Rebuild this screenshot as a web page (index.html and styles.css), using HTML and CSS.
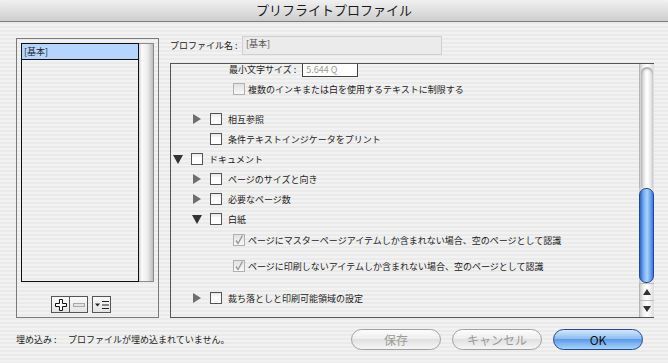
FILE: index.html
```html
<!DOCTYPE html>
<html lang="ja">
<head>
  <meta charset="UTF-8">
  <title>プリフライトプロファイル</title>
  <link rel="stylesheet" href="styles.css">
</head>
<body>
  <div class="window">
    <div class="titlebar">プリフライトプロファイル</div>

    <div class="content">
      <div class="sidebar">
        <div class="profile-list">
          <div class="rows">
            <div class="profile selected">[基本]</div>
          </div>
          <div class="list-scroll"></div>
        </div>
        <div class="list-tools">
          <div class="tool">
            <svg width="12" height="12" viewBox="0 0 12 12"><path d="M4.5 0.5h3v4h4v3h-4v4h-3v-4h-4v-3h4z" fill="#fff" stroke="#111" stroke-width="1"/></svg>
          </div>
          <div class="tool">
            <svg width="12" height="6" viewBox="0 0 12 6"><rect x="0.5" y="1.5" width="11" height="3" fill="#e4e4e4" stroke="#a8a8a8"/></svg>
          </div>
          <div class="tool menu">
            <svg width="14" height="10" viewBox="0 0 14 10"><path d="M0 3.5h5l-2.5 3z" fill="#222"/><path d="M7 1.5h7M7 5h7M7 8.5h7" stroke="#222" stroke-width="1"/></svg>
          </div>
        </div>
      </div>

      <div class="detail">
        <div class="name-row">
          <span class="name-label">プロファイル名 :</span>
          <div class="name-field">[基本]</div>
        </div>

        <div class="rules">
          <div class="rules-view">
            <div class="rules-inner">
              <div class="row row-size">
                <span class="size-label">最小文字サイズ :</span>
                <div class="size-field">5.644 Q</div>
              </div>
              <div class="row lvl2">
                <span class="check disabled"></span>
                <span>複数のインキまたは白を使用するテキストに制限する</span>
              </div>

              <div class="row lvl1 gap-10">
                <span class="twisty"><i class="tri-right"></i></span>
                <span class="check"></span>
                <span>相互参照</span>
              </div>
              <div class="row lvl1">
                <span class="twisty"></span>
                <span class="check"></span>
                <span>条件テキストインジケータをプリント</span>
              </div>
              <div class="row lvl0">
                <span class="twisty"><i class="tri-down"></i></span>
                <span class="check"></span>
                <span>ドキュメント</span>
              </div>
              <div class="row lvl1">
                <span class="twisty"><i class="tri-right"></i></span>
                <span class="check"></span>
                <span>ページのサイズと向き</span>
              </div>
              <div class="row lvl1">
                <span class="twisty"><i class="tri-right"></i></span>
                <span class="check"></span>
                <span>必要なページ数</span>
              </div>
              <div class="row lvl1">
                <span class="twisty"><i class="tri-down"></i></span>
                <span class="check"></span>
                <span>白紙</span>
              </div>
              <div class="row lvl2 gap-1">
                <span class="check disabled checked">
                  <svg width="10" height="10" viewBox="0 0 10 10"><path d="M2 5.5l2 3 4.5-8" fill="none" stroke="#9a9a9a" stroke-width="1.4"/></svg>
                </span>
                <span>ページにマスターページアイテムしか含まれない場合、空のページとして認識</span>
              </div>
              <div class="row lvl2 gap-6">
                <span class="check disabled checked">
                  <svg width="10" height="10" viewBox="0 0 10 10"><path d="M2 5.5l2 3 4.5-8" fill="none" stroke="#9a9a9a" stroke-width="1.4"/></svg>
                </span>
                <span>ページに印刷しないアイテムしか含まれない場合、空のページとして認識</span>
              </div>

              <div class="row lvl1 gap-12">
                <span class="twisty"><i class="tri-right"></i></span>
                <span class="check"></span>
                <span>裁ち落としと印刷可能領域の設定</span>
              </div>
            </div>
          </div>

          <div class="scrollbar">
            <div class="track"><div class="track-cap"></div></div>
            <div class="thumb"></div>
            <div class="arrow"><i class="arrow-up"></i></div>
            <div class="arrow"><i class="arrow-down"></i></div>
          </div>
        </div>
      </div>
    </div>

    <div class="footer">
      <span class="embed-label">埋め込み :</span>
      <span class="embed-text">プロファイルが埋め込まれていません。</span>
      <div class="buttons">
        <div class="btn">保存</div>
        <div class="btn">キャンセル</div>
        <div class="btn default">OK</div>
      </div>
    </div>
  </div>
</body>
</html>
```

FILE: styles.css
```css
body {
  margin: 0;
  font-family: "Noto Sans CJK JP", "Liberation Sans", sans-serif;
  font-size: 9px;
  color: #222;
}

.window {
  width: 668px;
  height: 363px;
  overflow: hidden;
  background: repeating-linear-gradient(to bottom, #f2f2f2 0, #f2f2f2 2px, #eaeaea 2px, #eaeaea 4px);
}

.titlebar {
  height: 21px;
  line-height: 20px;
  text-align: center;
  font-size: 13px;
  color: #1a1a1a;
  background: linear-gradient(to bottom, #f0f0f0, #dcdcdc 60%, #cdcdcd);
  border-bottom: 1px solid #7d7d7d;
  border-radius: 5px 5px 0 0;
}

.content {
  display: flex;
  padding-left: 16px;
}

/* profile list */
.sidebar {
  width: 137px;
  height: 274px;
  margin-top: 16px;
  border: 1px solid #7a7a7a;
  padding: 4px 0 0 4px;
  flex-shrink: 0;
}

.profile-list {
  display: flex;
  width: 133px;
  height: 239px;
}

.rows {
  width: 118px;
  border: 1px solid #111;
  box-sizing: border-box;
}

.profile {
  height: 15px;
  line-height: 15px;
  padding-left: 2px;
}

.profile.selected {
  background: #b5d5ff;
  border-bottom: 1px solid #111;
}

.list-scroll {
  flex: 1;
  border: 1px solid #8a8a8a;
  border-left: none;
  background: linear-gradient(to right, #d2d2d2, #fbfbfb 20%, #ececec 60%, #bcbcbc);
}

.list-tools {
  display: flex;
  margin: 14px 0 0 30px;
}

.tool {
  width: 17px;
  height: 15px;
  border: 1px solid #555;
  background: linear-gradient(to bottom, #fafafa, #e4e4e4);
  display: flex;
  align-items: center;
  justify-content: center;
}

.tool + .tool {
  border-left: none;
}

.tool.menu {
  margin-left: 4px;
  border-left: 1px solid #555;
}

/* details */
.detail {
  margin-left: 11px;
}

.name-row {
  display: flex;
  align-items: center;
  margin-top: 14px;
  height: 19px;
}

.name-label {
  width: 72px;
}

.name-field {
  width: 200px;
  height: 19px;
  box-sizing: border-box;
  border: 1px solid #d0d0d0;
  background: #ebebeb;
  color: #555;
  padding: 0 3px;
  line-height: 13px;
}

.rules {
  display: flex;
  width: 484px;
  height: 255px;
  margin-top: 8px;
  border: 1px solid #555;
  border-right: none;
  box-sizing: border-box;
}

.rules-view {
  flex: 1;
  overflow: hidden;
}

.rules-inner {
  margin-top: -5px;
}

.row {
  display: flex;
  align-items: center;
  height: 20px;
  white-space: nowrap;
}

.lvl0 { padding-left: 2px; }
.lvl1 { padding-left: 21px; }
.lvl2 { padding-left: 62px; }

.gap-1 { margin-top: 1px; }
.gap-6 { margin-top: 6px; }
.gap-10 { margin-top: 10px; }
.gap-12 { margin-top: 12px; }

.row-size {
  padding-left: 58px;
}

.size-label {
  margin-right: 6px;
}

.size-field {
  width: 56px;
  height: 19px;
  box-sizing: border-box;
  border: 1px solid #444;
  background: #fff;
  color: #9a9a9a;
  padding: 5px 0 0 3px;
  line-height: 12px;
  margin-bottom: 4px;
}

.twisty {
  width: 18px;
  height: 12px;
  display: flex;
  align-items: center;
}

.tri-right {
  width: 0;
  height: 0;
  border-left: 8px solid #6e6e6e;
  border-top: 5px solid transparent;
  border-bottom: 5px solid transparent;
  margin-left: 1px;
}

.tri-down {
  width: 0;
  height: 0;
  border-top: 9px solid #333;
  border-left: 5px solid transparent;
  border-right: 5px solid transparent;
}

.check {
  width: 12px;
  height: 12px;
  box-sizing: border-box;
  border: 1px solid #555;
  background: linear-gradient(to bottom, #e6e6e6, #fff 40%);
  margin-right: 6px;
  display: flex;
  align-items: center;
  justify-content: center;
}

.lvl2 .check {
  margin-right: 3px;
}

.check.disabled {
  border-color: #b0b0b0;
  background: linear-gradient(to bottom, #e2e2e2, #f8f8f8);
}

/* scrollbar */
.scrollbar {
  width: 15px;
  display: flex;
  flex-direction: column;
  background: linear-gradient(to right, #c4c4c4, #f2f2f2 30%, #fff 55%, #dcdcdc);
}

.track {
  flex: 1;
  padding: 3px 1px 0 1px;
  border-left: 1px solid #b4b4b4;
}

.track-cap {
  height: 100%;
  border-radius: 7px 7px 0 0;
  background: linear-gradient(to right, #bdbdbd, #f4f4f4 35%, #ffffff 55%, #d6d6d6);
  box-shadow: inset 0 2px 2px #aaa;
}

.thumb {
  height: 95px;
  box-sizing: border-box;
  border: 1px solid #23479a;
  border-radius: 7px;
  background: linear-gradient(to right, #2e64c8, #79b1f4 30%, #a9d2fd 55%, #5d9aea 85%, #3f76d6);
}

.arrow {
  height: 16px;
  border-left: 1px solid #b4b4b4;
  border-top: 1px solid #bdbdbd;
  display: flex;
  align-items: center;
  justify-content: center;
}

.arrow-up {
  border-bottom: 6px solid #333;
  border-left: 4px solid transparent;
  border-right: 4px solid transparent;
}

.arrow-down {
  border-top: 6px solid #333;
  border-left: 4px solid transparent;
  border-right: 4px solid transparent;
}

/* footer */
.footer {
  display: flex;
  align-items: center;
  margin-top: 11px;
  padding: 0 25px 0 16px;
  height: 21px;
}

.embed-label {
  width: 52px;
}

.buttons {
  display: flex;
  gap: 11px;
  margin-left: auto;
}

.btn {
  width: 90px;
  height: 21px;
  box-sizing: border-box;
  border: 1px solid #a0a0a0;
  border-radius: 11px;
  background: linear-gradient(to bottom, #fdfdfd, #ececec 50%, #e0e0e0 50%, #f6f6f6);
  color: #9a9a9a;
  font-size: 12px;
  line-height: 19px;
  text-align: center;
}

.btn.default {
  border-color: #24478e;
  background: linear-gradient(to bottom, #d4e8fd, #86b9f0 50%, #5d9be6 50%, #a8d4fd);
  color: #111;
}
```
